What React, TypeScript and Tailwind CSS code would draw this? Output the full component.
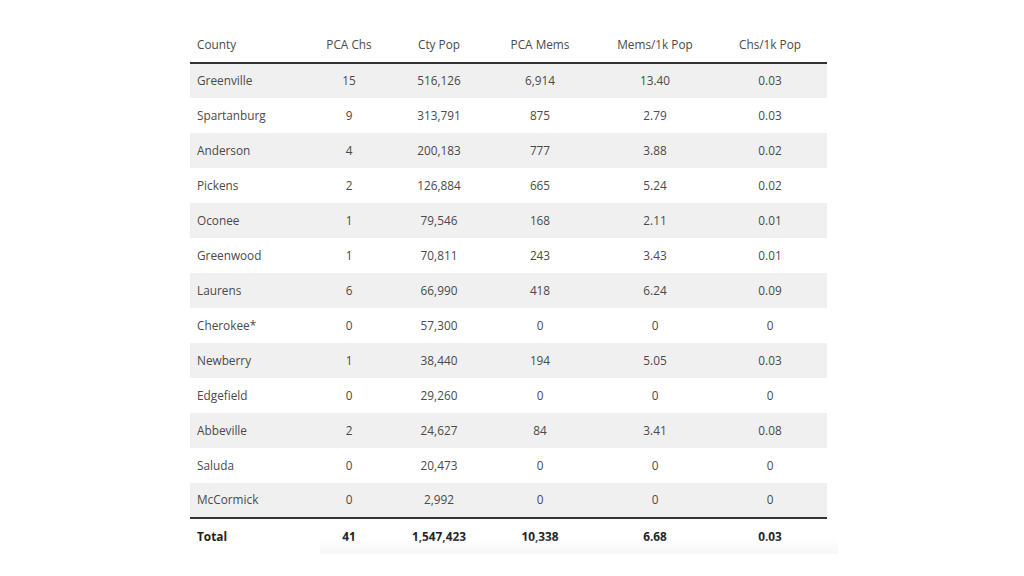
const rows: [string, string, string, string, string, string][] = [
  ["Greenville", "15", "516,126", "6,914", "13.40", "0.03"],
  ["Spartanburg", "9", "313,791", "875", "2.79", "0.03"],
  ["Anderson", "4", "200,183", "777", "3.88", "0.02"],
  ["Pickens", "2", "126,884", "665", "5.24", "0.02"],
  ["Oconee", "1", "79,546", "168", "2.11", "0.01"],
  ["Greenwood", "1", "70,811", "243", "3.43", "0.01"],
  ["Laurens", "6", "66,990", "418", "6.24", "0.09"],
  ["Cherokee*", "0", "57,300", "0", "0", "0"],
  ["Newberry", "1", "38,440", "194", "5.05", "0.03"],
  ["Edgefield", "0", "29,260", "0", "0", "0"],
  ["Abbeville", "2", "24,627", "84", "3.41", "0.08"],
  ["Saluda", "0", "20,473", "0", "0", "0"],
  ["McCormick", "0", "2,992", "0", "0", "0"],
];

const headers = ["County", "PCA Chs", "Cty Pop", "PCA Mems", "Mems/1k Pop", "Chs/1k Pop"];
const widths = ["w-[113px]", "w-[92px]", "w-[88px]", "w-[114px]", "w-[116px]", "w-[114px]"];

export default function App() {
  return (
    <div className="h-[576px] w-[1024px] bg-white font-['Open_Sans',sans-serif] text-[11.8px] text-[#4a4a4a]">
      <div className="relative ml-[190px] w-[637px] pt-[28px]">
        <table className="w-full table-fixed border-collapse">
          <thead>
            <tr className="h-[35px] border-b-2 border-[#333]">
              {headers.map((h, i) => (
                <th
                  key={h}
                  className={`${widths[i]} pb-[1px] font-normal ${i === 0 ? "pl-[7px] text-left" : "text-center"}`}
                >
                  {h}
                </th>
              ))}
            </tr>
          </thead>
          <tbody>
            {rows.map((r, ri) => (
              <tr
                key={r[0]}
                className={`h-[35px] ${ri % 2 === 0 ? "bg-[#f0f0f0]" : "bg-white"} ${
                  ri === rows.length - 1 ? "border-b-2 border-[#333]" : ""
                }`}
              >
                {r.map((c, i) => (
                  <td key={i} className={i === 0 ? "pl-[7px] text-left" : "text-center"}>
                    {c}
                  </td>
                ))}
              </tr>
            ))}
            <tr className="h-[36px] font-bold text-[#222]">
              <td className="pl-[7px] text-left">Total</td>
              <td className="text-center">41</td>
              <td className="text-center">1,547,423</td>
              <td className="text-center">10,338</td>
              <td className="text-center">6.68</td>
              <td className="text-center">0.03</td>
            </tr>
          </tbody>
        </table>
        <div className="pointer-events-none absolute bottom-0 left-[130px] -right-[11px] h-[16px] bg-gradient-to-b from-transparent to-[#f7f7f7]" />
      </div>
    </div>
  );
}
